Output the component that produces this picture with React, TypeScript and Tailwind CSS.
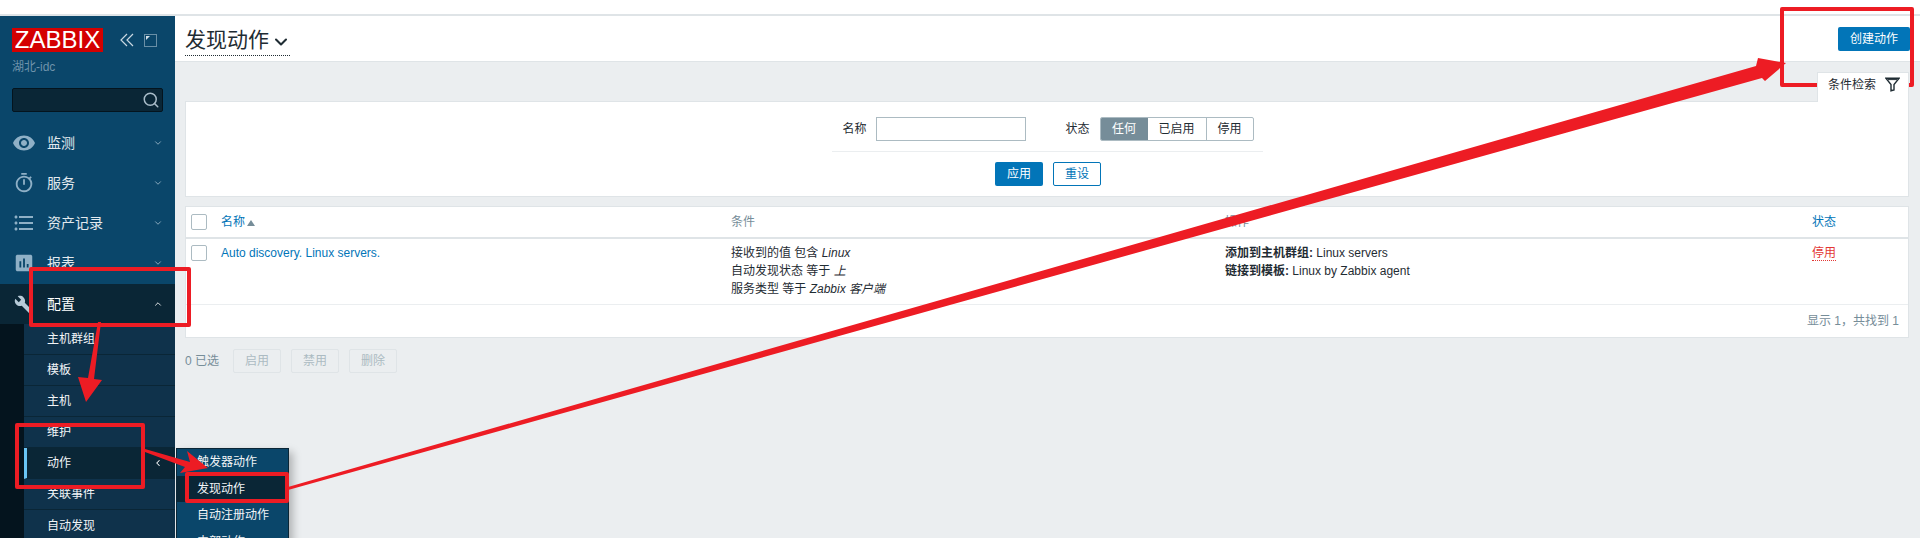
import React from "react";
import { MdVisibility, MdOutlineTimer, MdFormatListBulleted, MdAssessment, MdBuild } from "react-icons/md";
import { ChevronDown, ChevronUp, ChevronLeft, Search } from "lucide-react";

const font = { fontFamily: '"Liberation Sans", "Noto Sans CJK SC", Arial, sans-serif' };

function NavItem({ icon, label }: { icon: React.ReactNode; label: string }) {
  return (
    <div className="flex h-10 shrink-0 items-center text-[14px] text-[#e2e9ee]">
      <span className="flex w-[47px] justify-center text-[#8fb0c6]">{icon}</span>
      <span className="flex-1">{label}</span>
      <ChevronDown size={10} strokeWidth={2} className="mr-[12px] text-[#9fb9ca]" />
    </div>
  );
}

function SubItem({ label, active }: { label: string; active?: boolean }) {
  return (
    <div
      className={
        active
          ? "flex h-[31px] items-center border-b border-l-[3px] border-b-[#0a2636] border-l-[#69c5f5] bg-[#0a2636] pl-[20px] text-[12px] text-[#f2f5f7]"
          : "flex h-[31px] items-center border-b border-[#0a2636] pl-[23px] text-[12px] text-[#f2f5f7]"
      }
    >
      <span className="flex-1">{label}</span>
      {active && <ChevronLeft size={10} strokeWidth={2.5} className="mr-[12px] text-white" />}
    </div>
  );
}

function Sidebar() {
  return (
    <aside className="flex h-[522px] w-[175px] shrink-0 flex-col overflow-hidden bg-[#0a466a]">
      <div className="flex h-[36px] shrink-0 items-end pl-[12px]">
        <span className="flex h-[24px] w-[91px] items-center justify-center bg-[#d40000] text-[24px] leading-none text-white">ZABBIX</span>
        <svg width="14" height="14" viewBox="0 0 14 14" className="mb-[5px] ml-[17px]">
          <path d="M7 1 1 7l6 6M13 1 7 7l6 6" fill="none" stroke="#c9d8e2" strokeWidth="1.2" />
        </svg>
        <svg width="13" height="13" viewBox="0 0 13 13" className="mb-[5px] ml-[10px]">
          <rect x="0.5" y="0.5" width="12" height="12" fill="none" stroke="#c9d8e2" strokeDasharray="1 1" />
          <path d="M2 2h4L2 6z" fill="#d5e0e8" />
        </svg>
      </div>
      <div className="mt-[7px] shrink-0 pl-[12px] text-[12px] leading-[16px] text-[#6f93ab]">湖北-idc</div>
      <div className="mx-[12px] mt-[13px] flex h-[24px] w-[151px] shrink-0 items-center justify-end rounded-[2px] border border-[#04141e] bg-[#0a2636] pr-[2px]">
        <Search size={18} strokeWidth={2} className="text-[#a9bcc9]" />
      </div>
      <div className="mt-[11px] shrink-0">
        <NavItem icon={<MdVisibility size={24} />} label="监测" />
        <NavItem icon={<MdOutlineTimer size={22} />} label="服务" />
        <NavItem icon={<MdFormatListBulleted size={24} />} label="资产记录" />
        <NavItem icon={<MdAssessment size={22} />} label="报表" />
      </div>
      <div className="mt-px flex h-10 shrink-0 items-center bg-[#0a2636] text-[14px] text-white">
        <span className="flex w-[47px] justify-center text-[#b6cad8]"><MdBuild size={19} /></span>
        <span className="flex-1">配置</span>
        <ChevronUp size={10} strokeWidth={2} className="mr-[12px] text-white" />
      </div>
      <div className="flex-none bg-[#04141e] pl-[24px]">
        <div className="bg-[#0f324b]">
          <SubItem label="主机群组" />
          <SubItem label="模板" />
          <SubItem label="主机" />
          <SubItem label="维护" />
          <SubItem label="动作" active />
          <SubItem label="关联事件" />
        </div>
        <div className="flex h-[31px] items-center bg-[#0f324b] pl-[23px] text-[12px] text-[#f2f5f7]">自动发现</div>
      </div>
    </aside>
  );
}

function Flyout() {
  const items: [string, boolean][] = [["触发器动作", false], ["发现动作", true], ["自动注册动作", false], ["内部动作", false]];
  return (
    <div className="absolute left-[176px] top-[448px] w-[113px] border border-[#0a2636] bg-[#0a466a] shadow-[4px_4px_8px_rgba(0,0,0,0.25)]">
      {items.map(([t, a]) => (
        <div key={t} className={`flex h-[26.5px] items-center pl-[20px] text-[12px] text-[#f2f5f7] ${a ? "bg-[#0a2636]" : ""}`}>{t}</div>
      ))}
    </div>
  );
}

function FilterIcon() {
  return (
    <svg width="15" height="15" viewBox="0 0 15 15" className="ml-[9px] shrink-0">
      <path d="M.8 1.2h13.4L9 7.6v5.4l-3 .8V7.6z" fill="none" stroke="#1f2c33" strokeWidth="1.4" />
      <path d="M3 2.6h9" stroke="#1f2c33" strokeWidth="1" />
    </svg>
  );
}

const th = "text-[12px] leading-[18px]";
const cols = "grid-cols-[35px_510px_494px_587px_1fr]";

function Main() {
  return (
    <main className="min-w-0 flex-1 bg-[#ebeef0] text-[12px] text-[#1f2c33]">
      <header className="flex h-[46px] items-center justify-between border-b border-[#dfe4e7] bg-white pl-[10px] pr-[10px]">
        <div className="mt-[1px] flex h-[34px] w-[105px] items-center whitespace-nowrap border-b border-dotted border-[#1f2c33] pt-[1px] text-[21px] text-[#1f2c33]">
          <span className="shrink-0 leading-none">发现动作</span>
          <ChevronDown size={20} strokeWidth={2.5} className="-mr-[5px] ml-[2px] mt-[5px] shrink-0" />
        </div>
        <button className="flex h-[24px] w-[72px] items-center justify-center rounded-[2px] bg-[#0275b8] text-[12px] text-white">创建动作</button>
      </header>

      <div className="pl-[10px] pr-[11px]">
        <div className="flex justify-end">
          <div className="relative z-10 -mb-px mt-[10px] flex h-[30px] w-[92px] items-center whitespace-nowrap border border-b-0 border-[#dfe4e7] bg-white pb-[6px] pl-[10px] text-[#1f2c33]">
            <span>条件检索</span>
            <FilterIcon />
          </div>
        </div>

        <section className="h-[96px] border border-[#dfe4e7] bg-white">
          <div className="mx-auto w-[431px]">
            <div className="flex items-center pl-[11px] pt-[15px]">
              <span>名称</span>
              <input className="ml-[9px] h-[24px] w-[150px] border border-[#acbbc2] bg-white" />
              <span className="ml-[40px]">状态</span>
              <div className="ml-[10px] flex h-[24px] w-[154px] overflow-hidden rounded-[2px] border border-[#acbbc2]">
                <span className="flex w-[47px] items-center justify-center bg-[#768d99] text-white">任何</span>
                <span className="flex w-[59px] items-center justify-center border-r border-[#acbbc2]">已启用</span>
                <span className="flex flex-1 items-center justify-center">停用</span>
              </div>
            </div>
            <div className="mt-[10px] border-t border-[#ebeef0]" />
            <div className="mt-[10px] flex justify-center gap-[10px] pl-[2px]">
              <button className="h-[24px] w-[48px] rounded-[2px] bg-[#0275b8] text-white">应用</button>
              <button className="h-[24px] w-[48px] rounded-[2px] border border-[#0275b8] text-[#0275b8]">重设</button>
            </div>
          </div>
        </section>

        <section className="mt-[9px] border border-[#dfe4e7] bg-white">
          <div className={`grid h-[32px] ${cols} items-center border-b-2 border-[#dfe4e7]`}>
            <span className="pl-[5px]"><span className="block h-[16px] w-[16px] rounded-[2px] border border-[#acbbc2]" /></span>
            <span className={`${th} flex items-center text-[#0275b8]`}>名称<span className="ml-[2px] mt-px h-0 w-0 border-x-[4px] border-b-[6px] border-x-transparent border-b-[#768d99]" /></span>
            <span className={`${th} text-[#768d99]`}>条件</span>
            <span className={`${th} text-[#768d99]`}>操作</span>
            <span className={`${th} text-[#0275b8]`}>状态</span>
          </div>
          <div className={`grid h-[66px] ${cols} border-b border-[#ebeef0] pt-[5px]`}>
            <span className="pl-[5px]"><span className="mt-px block h-[16px] w-[16px] rounded-[2px] border border-[#acbbc2]" /></span>
            <span className={`${th} text-[#0275b8]`}>Auto discovery. Linux servers.</span>
            <div className={th}>
              <div>接收到的值 包含 <i>Linux</i></div>
              <div>自动发现状态 等于 <i>上</i></div>
              <div>服务类型 等于 <i>Zabbix 客户端</i></div>
            </div>
            <div className={th}>
              <div><b>添加到主机群组:</b> Linux servers</div>
              <div><b>链接到模板:</b> Linux by Zabbix agent</div>
            </div>
            <span className={th}><span className="border-b border-dotted border-[#e33734] text-[#e33734]">停用</span></span>
          </div>
          <div className="flex h-[32px] items-center justify-end pr-[9px] text-[#768d99]">显示 1，共找到 1</div>
        </section>

        <div className="mt-[11px] flex items-center">
          <span className="w-[48px] text-[#768d99]">0 已选</span>
          {["启用", "禁用", "删除"].map((t) => (
            <button key={t} className="mr-[10px] h-[24px] w-[48px] rounded-[2px] border border-[#dfe4e7] bg-[#ebeef0] text-[#acbbc2]">{t}</button>
          ))}
        </div>
      </div>
    </main>
  );
}

function Annotations() {
  const red = "#ed1c24";
  return (
    <svg className="pointer-events-none absolute left-0 top-0" width="1920" height="538" viewBox="0 0 1920 538">
      <g fill="none" stroke={red} strokeWidth="4" strokeLinejoin="round">
        <rect x="31" y="269" width="158" height="56" />
        <rect x="17" y="425" width="126" height="62" />
        <rect x="187" y="474" width="100" height="27" />
        <rect x="1782" y="9" width="130" height="76" />
      </g>
      <g fill={red}>
        <polygon points="98,322 101,322 94,379 102,380 86,402 78,377 88,378" />
        <polygon points="145,449 190,462 187,451 208,468 180,473 185,467 145,452" />
        <polygon points="288,487 1756,66 1758,58 1786,63 1765,81 1762,78 288,490" />
      </g>
    </svg>
  );
}

export default function App() {
  return (
    <div className="relative h-[538px] w-[1920px] overflow-hidden bg-white" style={font}>
      <div className="h-[16px] border-b-2 border-[#dfe4e7] bg-white" />
      <div className="flex h-[522px]">
        <Sidebar />
        <Main />
      </div>
      <Flyout />
      <Annotations />
    </div>
  );
}
